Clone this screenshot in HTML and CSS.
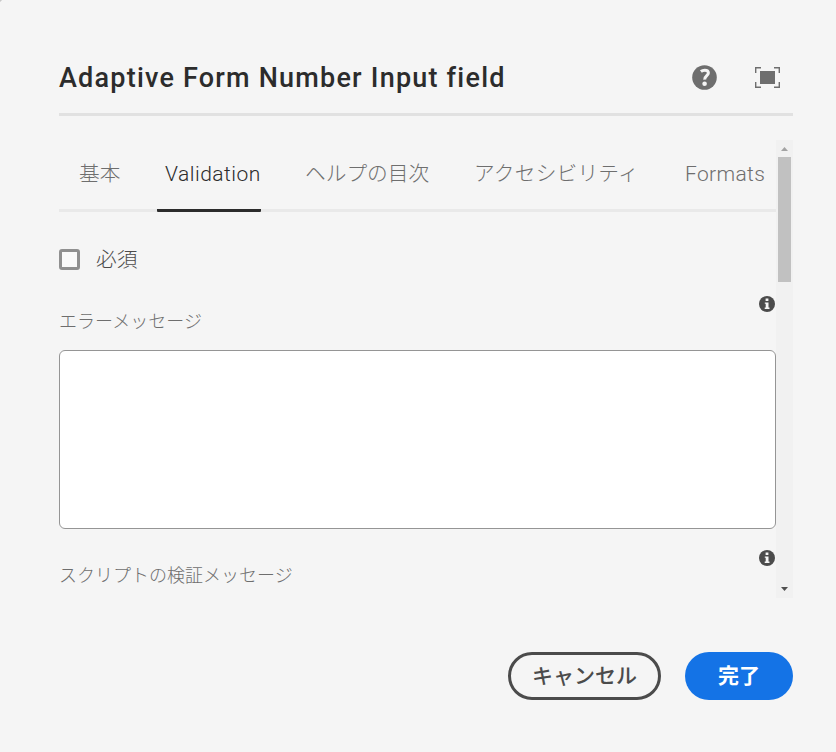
FILE: index.html
```html
<!DOCTYPE html>
<html lang="ja">
<head>
<meta charset="utf-8">
<title>Adaptive Form Number Input field</title>
<link rel="stylesheet" href="styles.css">
</head>
<body>
<main class="dialog">
  <header class="dialog-header">
    <h1 class="title">Adaptive Form Number Input field</h1>
    <svg class="help" width="25" height="25" viewBox="0 0 25 25"><circle cx="12.5" cy="12.5" r="12.3" fill="#6e6e6e"/><path d="M8.900 6.500C10 5.600 11.200 5.200 12.700 5.200c2.200 0 3.700 1.100 3.700 2.900 0 2.500-3.900 2.900-3.700 6.500" fill="none" stroke="#f5f5f5" stroke-width="3"/><circle cx="12.600" cy="18.700" r="2.300" fill="#f5f5f5"/></svg>
    <svg class="expand" width="25" height="21" viewBox="0 0 25 21"><rect x="5" y="4" width="15" height="13" fill="#6e6e6e"/><path d="M.7 6V.7H6M19 .7h5.300V6M24.300 15v5.300H19M6 20.300H.7V15" fill="none" stroke="#6e6e6e" stroke-width="1.400"/></svg>
  </header>
  <section class="scroll-area">
    <div class="content">
      <nav class="tabs">
        <a class="tab tab-basic">基本</a>
        <a class="tab tab-validation selected">Validation</a>
        <a class="tab tab-help">ヘルプの目次</a>
        <a class="tab tab-access">アクセシビリティ</a>
        <a class="tab tab-formats">Formats</a>
      </nav>
      <label class="required"><span class="box"></span><span class="required-text">必須</span></label>
      <div class="field-head first">
        <span class="label">エラーメッセージ</span>
        <svg class="info" width="16" height="16" viewBox="0 0 16 16"><circle cx="8" cy="8" r="8" fill="#4b4b4b"/><path d="M6.600 2.500h2.800v2.500H6.600zM5.800 6.400h3.700v5h1v1.500H5.700v-1.500h1V7.800h-.9z" fill="#f5f5f5"/></svg>
      </div>
      <div class="textarea"></div>
      <div class="field-head second">
        <span class="label">スクリプトの検証メッセージ</span>
        <svg class="info" width="16" height="16" viewBox="0 0 16 16"><circle cx="8" cy="8" r="8" fill="#4b4b4b"/><path d="M6.600 2.500h2.800v2.500H6.600zM5.800 6.400h3.700v5h1v1.500H5.700v-1.500h1V7.800h-.9z" fill="#f5f5f5"/></svg>
      </div>
    </div>
    <div class="scrollbar">
      <svg class="arrow" width="17" height="17" viewBox="0 0 17 17"><path d="M5 11l3.500-4 3.500 4z" fill="#a3a3a3"/></svg>
      <div class="thumb"></div>
      <svg class="arrow down" width="17" height="17" viewBox="0 0 17 17"><path d="M5 6h7l-3.500 4z" fill="#505050"/></svg>
    </div>
  </section>
  <footer class="actions">
    <button class="button cancel">キャンセル</button>
    <button class="button done">完了</button>
  </footer>
</main>
</body>
</html>
```
FILE: styles.css
```css
* { box-sizing: border-box; }
body {
  margin: 0;
  background: #f5f5f5;
  font-family: Roboto, "Noto Sans CJK JP", sans-serif;
  color: #6e6e6e;
}
svg { display: block; flex: none; }
.dialog {
  width: 836px;
  height: 752px;
  padding: 40px 43px 0 59px;
  overflow: hidden;
  background: linear-gradient(135deg, #c8c8c8 1px, #f5f5f5 2px);
}
.dialog-header { display: flex; align-items: center; height: 76px; padding-top: 2px; border-bottom: 3px solid #e1e1e1; }
.title { margin: 0; flex: 1; font-size: 27px; line-height: 40px; font-weight: 500; letter-spacing: 1.21px; color: #2c2c2c; white-space: nowrap; }
.expand { margin: 0 13px 0 38px; }
.scroll-area { display: flex; height: 458px; margin-top: 24px; }
.content { width: 717px; overflow: hidden; }
.tabs { display: flex; height: 72px; border-bottom: 3px solid #e9e9e9; padding-left: 12px; }
.tab { flex: none; height: 72px; padding: 0 8px; line-height: 69px; font-size: 20.7px; font-weight: 300; white-space: nowrap; }
.tab-basic { width: 58px; margin-right: 28px; }
.tab-validation { width: 104px; margin-right: 36px; font-size: 21px; letter-spacing: .5px; }
.tab-help { width: 141px; margin-right: 28px; }
.tab-access { width: 181px; margin-right: 30px; letter-spacing: .2px; }
.tab-formats { font-size: 21px; letter-spacing: .35px; }
.selected { color: #2c2c2c; border-bottom: 3px solid #2c2c2c; border-radius: 1px; }
.required { display: flex; align-items: center; height: 40px; margin-top: 27px; gap: 16px; font-size: 20.7px; font-weight: 300; color: #4b4b4b; }
.required-text { padding-bottom: 3px; }
.box { width: 21px; height: 21px; border: 3px solid #909090; border-radius: 3px; background: #fafafa; }
.field-head { display: flex; justify-content: space-between; padding-right: 1px; }
.first { height: 71px; padding-top: 17px; }
.label { font-size: 18px; line-height: 26px; font-weight: 300; padding-top: 13px; }
.textarea { height: 179px; border: 1px solid #959595; border-radius: 6px; background: #fff; }
.second { padding-top: 21px; }
.scrollbar { display: flex; flex-direction: column; width: 17px; height: 458px; background: #f1f1f1; }
.thumb { width: 13px; height: 125px; margin-left: 2px; background: #c1c1c1; }
.down { margin-top: auto; }
.actions { display: flex; justify-content: flex-end; gap: 24px; margin-top: 54px; }
.button { height: 48px; border-radius: 24px; padding: 0 0 4px; font-family: inherit; font-size: 21px; font-weight: 700; }
.cancel { width: 153px; border: 3px solid #4b4b4b; background: transparent; color: #4b4b4b; font-weight: 500; }
.done { width: 108px; border: 0; background: #1473e6; color: #fff; }
```
